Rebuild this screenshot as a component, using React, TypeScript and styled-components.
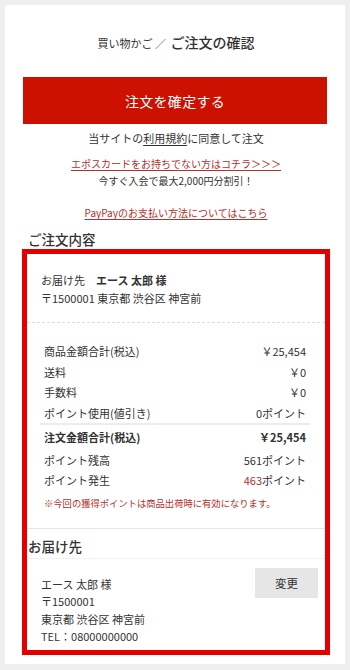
import React from 'react';
import styled, { createGlobalStyle } from 'styled-components';

const GlobalStyle = createGlobalStyle`
    body {
        margin: 0;
        background: #efefef;
        font-family: "Noto Sans CJK JP", "Noto Sans", sans-serif;
        color: #333;
    }
`;

const Page = styled.div`
    padding: 5px;
    height: 670px;
    box-sizing: border-box;
`;

const Panel = styled.div`
    background: #fff;
    height: 659px;
    padding: 0 15px 0 17px;
    box-sizing: border-box;
    display: flex;
    flex-direction: column;
`;

const Title = styled.h1`
    margin: 27px 0 24px;
    line-height: 20px;
    text-align: center;
    font-weight: 400;
    font-size: 11px;
    color: #333;

    span {
        font-size: 14px;
        font-weight: 500;
        margin-left: 2px;
    }
`;

const ConfirmButton = styled.button`
    height: 47px;
    margin: 0 3px 0 1px;
    border: 0;
    background: #cc1100;
    color: #fff;
    font-family: inherit;
    font-size: 14px;
    letter-spacing: 0.3px;
`;

const Note = styled.p<{ $mt: number; $size?: number }>`
    margin: ${(p) => p.$mt}px 0 0;
    text-align: center;
    font-size: ${(p) => p.$size ?? 10}px;
    line-height: ${(p) => (p.$size === 11 ? 18 : 16)}px;
    color: #333;

    u {
        text-underline-offset: 2px;
    }
`;

const RedLink = styled.a`
    color: #b4302a;
    text-decoration: underline;
    text-underline-offset: 2px;
`;

const SectionHeading = styled.h2<{ $indent: number }>`
    margin: 0;
    padding-left: ${(p) => p.$indent}px;
    font-size: 13.5px;
    font-weight: 500;
    line-height: 20px;
    color: #333;
`;

const OrderBox = styled.div`
    border: 5px solid #e50000;
    display: flex;
    flex-direction: column;
`;

const AddressTop = styled.div`
    padding: 17px 14px 15px;
    font-size: 11px;
    line-height: 18px;
    border-bottom: 1px dashed #ddd;

    b {
        font-weight: 700;
    }
`;

const Amounts = styled.div`
    padding: 18px 15px 17px 13px;
    border-bottom: 1px solid #e6e6e6;
`;

const Row = styled.div<{ $bold?: boolean; $gap?: number }>`
    display: flex;
    justify-content: space-between;
    padding: 0 4px;
    height: 20.5px;
    line-height: 20.5px;
    font-size: 11px;
    font-weight: ${(p) => (p.$bold ? 700 : 400)};
    margin-top: ${(p) => p.$gap ?? 0}px;
`;

const Divider = styled.div`
    height: 2px;
    background: #ececec;
`;

const RedNum = styled.span`
    color: #b4302a;
`;

const PointNote = styled.p`
    margin: 4px 0 0;
    padding: 0 4px;
    font-size: 9.3px;
    line-height: 16px;
    color: #b4302a;
`;

const ShipHead = styled.div`
    padding: 7px 0 2px 1px;
    border-bottom: 1px solid #f2f2f2;
`;

const ShipBody = styled.div`
    display: flex;
    justify-content: space-between;
    align-items: flex-start;
    padding: 0 7px 4px 14px;
`;

const ShipLines = styled.div`
    padding-top: 17px;
    font-size: 11px;
    line-height: 17.6px;
`;

const ChangeButton = styled.button`
    margin-top: 9px;
    width: 63px;
    height: 30px;
    border: 0;
    background: #e6e6e6;
    color: #333;
    font-family: inherit;
    font-size: 11.5px;
`;

const App = () => {
    return (
        <Page>
            <GlobalStyle />
            <Panel>
                <Title>
                    買い物かご ／ <span>ご注文の確認</span>
                </Title>
                <ConfirmButton>注文を確定する</ConfirmButton>
                <Note $mt={5} $size={11}>
                    当サイトの<u>利用規約</u>に同意して注文
                </Note>
                <Note $mt={9}>
                    <RedLink>エポスカードをお持ちでない方はコチラ＞＞＞</RedLink>
                </Note>
                <Note $mt={1}>今すぐ入会で最大2,000円分割引！</Note>
                <Note $mt={16}>
                    <RedLink>PayPayのお支払い方法についてはこちら</RedLink>
                </Note>
                <div style={{ height: 8 }} />
                <SectionHeading $indent={6}>ご注文内容</SectionHeading>
                <OrderBox>
                    <AddressTop>
                        <div>
                            お届け先　<b>エース 太郎 様</b>
                        </div>
                        <div>〒1500001 東京都 渋谷区 神宮前</div>
                    </AddressTop>
                    <Amounts>
                        <Row>
                            <span>商品金額合計(税込)</span>
                            <span>￥25,454</span>
                        </Row>
                        <Row>
                            <span>送料</span>
                            <span>￥0</span>
                        </Row>
                        <Row>
                            <span>手数料</span>
                            <span>￥0</span>
                        </Row>
                        <Row>
                            <span>ポイント使用(値引き)</span>
                            <span>0ポイント</span>
                        </Row>
                        <Divider />
                        <Row $bold $gap={2}>
                            <span>注文金額合計(税込)</span>
                            <span>￥25,454</span>
                        </Row>
                        <Row $gap={2}>
                            <span>ポイント残高</span>
                            <span>561ポイント</span>
                        </Row>
                        <Row>
                            <span>ポイント発生</span>
                            <span>
                                <RedNum>463</RedNum>ポイント
                            </span>
                        </Row>
                        <PointNote>
                            ※今回の獲得ポイントは商品出荷時に有効になります。
                        </PointNote>
                    </Amounts>
                    <ShipHead>
                        <SectionHeading $indent={0}>お届け先</SectionHeading>
                    </ShipHead>
                    <ShipBody>
                        <ShipLines>
                            <div>エース 太郎 様</div>
                            <div>〒1500001</div>
                            <div>東京都 渋谷区 神宮前</div>
                            <div>TEL：08000000000</div>
                        </ShipLines>
                        <ChangeButton>変更</ChangeButton>
                    </ShipBody>
                </OrderBox>
            </Panel>
        </Page>
    );
};

export default App;
